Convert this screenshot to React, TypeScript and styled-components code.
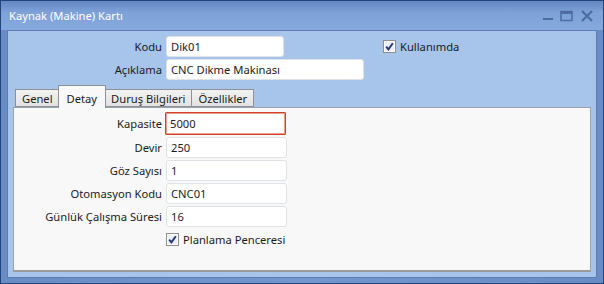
import React from 'react';
import styled, { createGlobalStyle } from 'styled-components';

const GlobalStyle = createGlobalStyle`
  html, body {
    margin: 0;
    padding: 0;
    background: #ffffff;
  }
  body {
    font-family: "Noto Sans", "Open Sans", sans-serif;
    font-size: 11.2px;
    color: #1b1b1b;
  }
  * {
    box-sizing: border-box;
  }
`;

interface FieldRow {
  label: string;
  value: string;
  focused?: boolean;
}

const detailRows: FieldRow[] = [
  { label: 'Kapasite', value: '5000', focused: true },
  { label: 'Devir', value: '250' },
  { label: 'Göz Sayısı', value: '1' },
  { label: 'Otomasyon Kodu', value: 'CNC01' },
  { label: 'Günlük Çalışma Süresi', value: '16' },
];

const tabs = ['Genel', 'Detay', 'Duruş Bilgileri', 'Özellikler'];

const CheckMark: React.FC = () => (
  <Check>
    <svg width="13" height="13" viewBox="0 0 13 13">
      <rect x="0.5" y="0.5" width="12" height="12" fill="#ffffff" stroke="#8e8f8f" />
      <rect x="2" y="2" width="9" height="9" fill="#eceff3" />
      <path d="M3.2 6.6 L5.4 9.4 L9.8 3.2" fill="none" stroke="#26367a" strokeWidth="1.9" />
    </svg>
  </Check>
);

const App: React.FC = () => {
  return (
    <>
      <GlobalStyle />
      <Window>
        <TitleBar>
          <Title>Kaynak (Makine) Kartı</Title>
          <Controls>
            <svg width="56" height="14" viewBox="0 0 56 14">
              <rect x="2" y="8" width="10" height="2" fill="#4c6ca2" />
              <rect x="20" y="1.5" width="11" height="9" fill="none" stroke="#4c6ca2" strokeWidth="1.5" />
              <rect x="20" y="1" width="11" height="3" fill="#4c6ca2" />
              <path d="M41 1 L51 11 M51 1 L41 11" stroke="#4c6ca2" strokeWidth="2.2" />
            </svg>
          </Controls>
        </TitleBar>
        <Client>
          <HeaderForm>
            <Row>
              <Label width={154}>Kodu</Label>
              <Input width={118}>Dik01</Input>
              <CheckLabel offset={95}>
                <CheckMark />
                Kullanımda
              </CheckLabel>
            </Row>
            <Row>
              <Label width={154}>Açıklama</Label>
              <Input width={198}>CNC Dikme Makinası</Input>
            </Row>
          </HeaderForm>
          <TabStrip>
            {tabs.map((t) => (
              <Tab key={t} active={t === 'Detay'}>
                {t}
              </Tab>
            ))}
          </TabStrip>
          <Panel>
            {detailRows.map((r) => (
              <Row key={r.label}>
                <Label width={148}>{r.label}</Label>
                <Input width={121} focused={r.focused}>
                  {r.value}
                </Input>
              </Row>
            ))}
            <Row>
              <CheckLabel offset={152}>
                <CheckMark />
                Planlama Penceresi
              </CheckLabel>
            </Row>
          </Panel>
        </Client>
      </Window>
    </>
  );
};

export default App;

const Window = styled.div`
  width: 604px;
  height: 284px;
  border: 1px solid #22447c;
  background: linear-gradient(to right, #6a8cc5, #7396cd 50%, #6a8cc5);
  display: flex;
  flex-direction: column;
`;

const TitleBar = styled.div`
  height: 29px;
  flex: none;
  display: flex;
  align-items: center;
  justify-content: space-between;
  padding: 0 6px 0 8px;
  background: linear-gradient(#6487c3, #7ea2d8 40%, #86a9dd);
`;

const Title = styled.span`
  color: #ffffff;
  font-size: 11.2px;
  margin-top: -1px;
`;

const Controls = styled.div`
  display: flex;
  align-items: center;
  margin-top: 2px;
`;

const Client = styled.div`
  flex: 1;
  margin: 0 6px 5px 6px;
  border: 1px solid #5a7cb2;
  background: #a7c4eb;
  display: flex;
  flex-direction: column;
  padding: 5px 5px 5px 5px;
`;

const HeaderForm = styled.div`
  display: flex;
  flex-direction: column;
  gap: 2px;
  margin-left: -5px;
`;

const Row = styled.div`
  display: flex;
  align-items: center;
  gap: 4px;
  min-height: 21px;
`;

const Label = styled.span<{ width: number }>`
  width: ${(p) => p.width}px;
  text-align: right;
  white-space: nowrap;
`;

const Input = styled.div<{ width: number; focused?: boolean }>`
  width: ${(p) => p.width}px;
  height: ${(p) => (p.focused ? 23 : 21)}px;
  background: #ffffff;
  border: 1px solid ${(p) => (p.focused ? '#d0402c' : '#dfe2e6')};
  box-shadow: ${(p) => (p.focused ? 'inset 0 0 0 1px #ec9c90' : 'none')};
  border-radius: ${(p) => (p.focused ? 1 : 3)}px;
  padding: 0 4px;
  display: flex;
  align-items: center;
  white-space: nowrap;
  margin-left: ${(p) => (p.focused ? -1 : 0)}px;
`;

const CheckLabel = styled.label<{ offset: number }>`
  display: flex;
  align-items: center;
  gap: 4px;
  margin-left: ${(p) => p.offset}px;
  white-space: nowrap;
`;

const Check = styled.span`
  display: inline-flex;
  width: 13px;
  height: 13px;
`;

const TabStrip = styled.div`
  display: flex;
  align-items: flex-end;
  height: 22px;
  margin-top: 5px;
  padding-left: 2px;
  position: relative;
  z-index: 1;
`;

const Tab = styled.div<{ active?: boolean }>`
  height: ${(p) => (p.active ? 23 : 18)}px;
  margin-bottom: ${(p) => (p.active ? -1 : 0)}px;
  margin-left: ${(p) => (p.active ? -2 : -1)}px;
  margin-right: ${(p) => (p.active ? -1 : 0)}px;
  padding: ${(p) => (p.active ? '2px 8px 0 8px' : '0 6px')};
  border: 1px solid #8d9094;
  border-bottom: ${(p) => (p.active ? 'none' : '1px solid #8d9094')};
  background: ${(p) => (p.active ? '#f8f8f8' : 'linear-gradient(#f2f2f2, #e2e2e2)')};
  display: flex;
  align-items: center;
  white-space: nowrap;
  position: relative;
  z-index: ${(p) => (p.active ? 2 : 1)};
  &:first-child {
    margin-left: 0;
  }
`;

const Panel = styled.div`
  flex: 1;
  background: #f8f8f8;
  border: 1px solid #9aa3ad;
  border-bottom: 2px solid #9a9a9a;
  display: flex;
  flex-direction: column;
  gap: 2px;
  padding-top: 4px;
`;
